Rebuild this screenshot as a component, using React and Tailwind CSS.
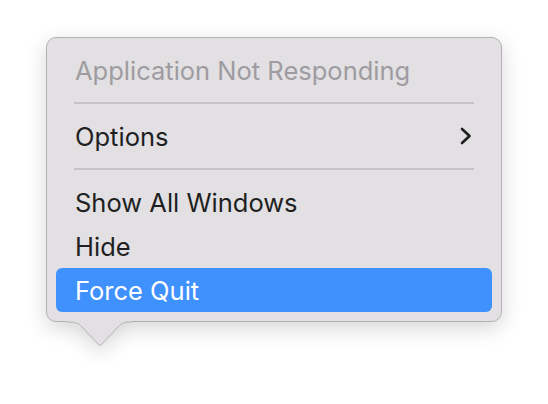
export default function App() {
  const font = { fontFamily: 'Inter, "Noto Sans", sans-serif' };
  return (
    <div className="w-[548px] h-[404px] bg-white pl-[46px] pt-[37px]" style={font}>
      <div className="relative w-[456px] drop-shadow-[0_6px_10px_rgba(0,0,0,0.16)]">
        <div className="w-[456px] h-[285px] rounded-[10px] bg-[#e2e0e3] border border-[#b3b1b4] px-[9px] pt-[10px] pb-[9px] flex flex-col">
          <div className="h-[44px] flex items-center pt-[2px] pl-[19px] text-[25.5px] text-[#9e9ca0]">
            Application Not Responding
          </div>
          <div className="my-[10px] mx-[18px] h-[2px] bg-[#c6c4c8]" />
          <div className="h-[44px] flex items-center justify-between pl-[19px] pr-[20px] text-[25.5px] text-[#1f1f1f]">
            <span className="pt-[2px]">Options</span>
            <svg width="12" height="18" viewBox="0 0 12 18" fill="none">
              <path d="M2 2 L9.5 9 L2 16" stroke="#1f1f1f" strokeWidth="2.6" strokeLinecap="round" strokeLinejoin="round" />
            </svg>
          </div>
          <div className="my-[10px] mx-[18px] h-[2px] bg-[#c6c4c8]" />
          <div className="h-[44px] flex items-center pt-[2px] pl-[19px] text-[25.5px] text-[#1f1f1f]">Show All Windows</div>
          <div className="h-[44px] flex items-center pt-[2px] pl-[19px] text-[25.5px] text-[#1f1f1f]">Hide</div>
          <div className="h-[44px] flex items-center pt-[2px] pl-[19px] text-[25.5px] text-white bg-[#3f91fd] rounded-[6px]">Force Quit</div>
        </div>
        <svg className="absolute left-[20px] top-[283px]" width="66" height="28" viewBox="0 0 66 28">
          <path d="M0 0 L66 0 L66 2 C58 2 56 3 52 7 L35.5 24.5 Q34 26 32.5 24.5 L16 7 C12 3 10 2 2 2 L0 2 Z" fill="#e2e0e3" />
          <path d="M0 2 C10 2 12 3 16 7 L32.5 24.5 Q34 26 35.5 24.5 L52 7 C56 3 58 2 66 2" fill="none" stroke="#b3b1b4" strokeWidth="1" />
        </svg>
      </div>
    </div>
  );
}
